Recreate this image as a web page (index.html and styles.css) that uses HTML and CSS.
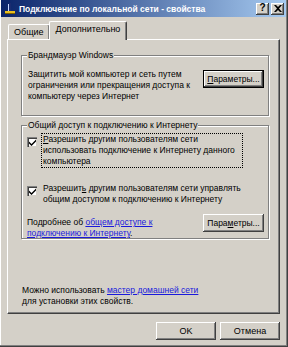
FILE: index.html
```html
<!DOCTYPE html>
<html lang="ru">
<head>
<meta charset="utf-8">
<link rel="stylesheet" href="styles.css">
</head>
<body>
<div class="window">
  <div class="titlebar">
    <svg class="ticon" width="12" height="12" viewBox="0 0 12 12">
      <rect x="5" y="0" width="2" height="9" fill="#1a2c70"/>
      <rect x="4" y="1" width="1" height="7" fill="#c8d8ff"/>
      <rect x="1" y="8" width="10" height="3" fill="#e8c020"/>
      <rect x="1" y="10" width="10" height="1" fill="#806000"/>
    </svg>
    <span class="title">Подключение по локальной сети - свойства</span>
    <div class="tbtns">
      <span class="tbtn">?</span>
      <span class="tbtn close">
        <svg width="8" height="7" viewBox="0 0 8 7"><path d="M0 0h2l2 2 2-2h2L5 3.5 8 7H6L4 5 2 7H0l3-3.5z" fill="#000"/></svg>
      </span>
    </div>
  </div>
  <div class="content">
    <div class="tabs">
      <div class="tab">Общие</div>
      <div class="tab active">Дополнительно</div>
    </div>
    <div class="panel">
      <div class="group g1">
        <span class="legend">Брандмауэр Windows</span>
        <div class="g1row">
          <p class="txt">Защитить мой компьютер и сеть путем<br>ограничения или прекращения доступа к<br>компьютеру через Интернет</p>
          <span class="btn default"><u>П</u>араметры...</span>
        </div>
      </div>
      <div class="group g2">
        <span class="legend">Общий доступ к подключению к Интернету</span>
        <div class="check">
          <span class="box"><svg width="7" height="7" viewBox="0 0 7 7"><path d="M0 2.5l2.5 2.5L7 0.5V2.5L2.5 7 0 4.5z" fill="#000"/></svg></span>
          <span class="clabel focus"><u>Р</u>азрешить другим пользователям сети<br>использовать подключение к Интернету данного<br>компьютера</span>
        </div>
        <div class="check c2">
          <span class="box"><svg width="7" height="7" viewBox="0 0 7 7"><path d="M0 2.5l2.5 2.5L7 0.5V2.5L2.5 7 0 4.5z" fill="#000"/></svg></span>
          <span class="clabel">Разрешит<u>ь</u> другим пользователям сети управлять<br>общим доступом к подключению к Интернету</span>
        </div>
        <div class="morerow">
          <p class="txt more">Подробнее об <a href="#">общем доступе к</a><br><a href="#">подключению к Интернету</a>.</p>
          <span class="btn">Пара<u>м</u>етры...</span>
        </div>
      </div>
      <p class="txt note">Можно использовать <a href="#">мастер домашней сети</a><br>для установки этих свойств.</p>
    </div>
    <div class="buttons">
      <span class="btn big">OK</span>
      <span class="btn big">Отмена</span>
    </div>
  </div>
</div>
</body>
</html>
```

FILE: styles.css
```css
* { box-sizing: border-box; }
html, body { margin: 0; padding: 0; }
body {
  font-family: "Liberation Sans", Arial, sans-serif;
  font-size: 8.5px;
  color: #000;
  background: #d4d0c8;
}
.window {
  width: 288px;
  height: 347px;
  background: #d4d0c8;
  display: flex;
  flex-direction: column;
  padding: 0 0 3px 0;
  box-shadow: inset 0 -1px #404040, inset -1px 0 #404040, inset 0 -2px #808080, inset -2px 0 #808080, inset 1px 0 #fff;
  overflow: hidden;
}
.titlebar {
  height: 17px;
  margin: 0 2px 0 1px;
  background: linear-gradient(to right, #0a246a, #a6caf0);
  display: flex;
  align-items: center;
  padding: 0 2px 0 3px;
  gap: 3px;
}
.ticon { flex: none; }
.title {
  color: #fff;
  font-weight: bold;
  font-size: 8.5px;
  white-space: nowrap;
  flex: 1;
}
.tbtns { display: flex; gap: 2px; }
.tbtn {
  width: 13px;
  height: 12px;
  background: #d4d0c8;
  box-shadow: inset -1px -1px #404040, inset 1px 1px #fff, inset -2px -2px #808080;
  display: flex;
  align-items: center;
  justify-content: center;
  font-weight: bold;
  font-size: 10px;
  line-height: 1;
  padding-bottom: 1px;
}
.content {
  flex: 1;
  display: flex;
  flex-direction: column;
  padding: 4px 8px 0 7px;
}
.tabs {
  display: flex;
  align-items: flex-end;
  height: 18px;
  padding-left: 1px;
  position: relative;
  z-index: 1;
  font-size: 9px;
}
.tab {
  height: 15px;
  padding: 2px 5px 0 5px;
  border-top: 1px solid #fff;
  border-left: 1px solid #fff;
  border-right: 1px solid #404040;
  box-shadow: inset -1px 0 #808080;
  border-radius: 2px 2px 0 0;
  white-space: nowrap;
}
.tab.active {
  height: 19px;
  margin-bottom: -1px;
  margin-left: -1px;
  padding: 2px 6px 0 6px;
  background: #d4d0c8;
}
.panel {
  height: 275px;
  border-top: 1px solid #fff;
  border-left: 1px solid #fff;
  border-right: 1px solid #404040;
  border-bottom: 1px solid #404040;
  box-shadow: inset -1px -1px #808080;
  padding: 15px 10px 0 13px;
  display: flex;
  flex-direction: column;
}
.group {
  position: relative;
  border: 1px solid #808080;
  box-shadow: inset 1px 1px #fff, 1px 1px #fff;
}
.legend {
  position: absolute;
  left: 5px;
  top: -7px;
  background: #d4d0c8;
  padding: 0 1px;
  white-space: nowrap;
  line-height: 12px;
}
.txt { margin: 0; line-height: 11px; white-space: nowrap; }
.g1 { height: 61px; padding: 13px 4px 0 6px; }
.g1row { display: flex; align-items: flex-start; justify-content: space-between; }
.btn {
  display: inline-flex;
  align-items: center;
  justify-content: center;
  width: 61px;
  height: 18px;
  background: #d4d0c8;
  box-shadow: inset -1px -1px #404040, inset 1px 1px #fff, inset -2px -2px #808080;
  flex: none;
  white-space: nowrap;
}
.g1row .btn { margin-top: 1px; }
.btn.default {
  border: 1px solid #000;
}
.g2 { margin-top: 9px; height: 114px; padding: 8px 4px 0 5px; }
.check { display: flex; align-items: flex-start; }
.box {
  width: 10px;
  height: 10px;
  flex: none;
  margin-top: 3px;
  margin-right: 5px;
  background: #fff;
  box-shadow: inset 1px 1px #808080, inset 2px 2px #404040, inset -1px -1px #d4d0c8;
  display: flex;
  align-items: center;
  justify-content: center;
  padding: 1px 0 0 1px;
}
.clabel { line-height: 11px; padding: 0 1px; white-space: nowrap; }
.clabel.focus { outline: 1px dotted #000; outline-offset: 0; padding: 0 2px 0 1px; width: 200px; }
.c2 { margin-top: 16px; }
.morerow { display: flex; justify-content: space-between; align-items: flex-start; margin-top: 9px; }
.more { padding-top: 3px; }
a { color: #1a1adc; text-decoration: underline; }
.note { margin-top: auto; margin-bottom: 6px; padding-left: 1px; }
.buttons {
  display: flex;
  justify-content: flex-end;
  gap: 4px;
  margin-top: 8px;
}
.btn.big { width: 60px; height: 18px; font-size: 9px; }
```
